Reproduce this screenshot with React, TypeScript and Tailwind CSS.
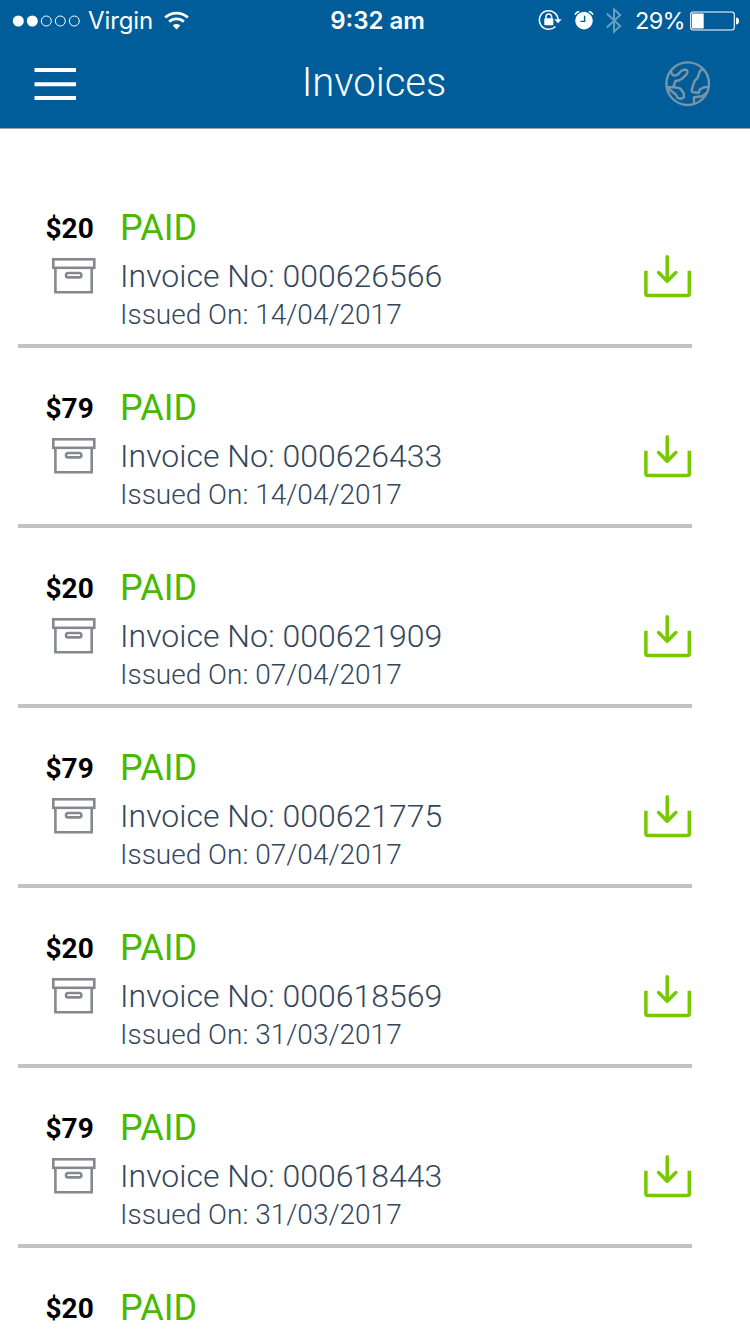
type Invoice = { amount: string; id?: string; issued?: string };

const INVOICES: Invoice[] = [
  { amount: "$20", id: "000626566", issued: "14/04/2017" },
  { amount: "$79", id: "000626433", issued: "14/04/2017" },
  { amount: "$20", id: "000621909", issued: "07/04/2017" },
  { amount: "$79", id: "000621775", issued: "07/04/2017" },
  { amount: "$20", id: "000618569", issued: "31/03/2017" },
  { amount: "$79", id: "000618443", issued: "31/03/2017" },
  { amount: "$20" },
];

export default function App() {
  return (
    <div className="flex h-[1334px] w-[750px] flex-col overflow-hidden bg-white font-['Roboto',sans-serif]">
      <header className="h-[129px] shrink-0 border-b border-[#a0a0a0] bg-[#005d99] text-white">
        <StatusBar />
        <div className="grid h-[88px] grid-cols-[1fr_auto_1fr] items-center pr-[39px] pl-[34px]">
          <MenuIcon />
          <h1 className="-mt-[2px] pl-[3px] text-[40px] leading-[48px] font-light">Invoices</h1>
          <GlobeIcon />
        </div>
      </header>
      <main className="pt-[39px]">
        {INVOICES.map((invoice, i) => (
          <InvoiceRow key={i} invoice={invoice} />
        ))}
      </main>
    </div>
  );
}

function StatusBar() {
  return (
    <div className="grid h-10 grid-cols-[1fr_auto_1fr] items-center pr-[11px] pl-3 font-['Inter',sans-serif] text-[24px] leading-10">
      <div className="flex items-center">
        <SignalDots />
        <span className="mt-px ml-[7px] tracking-[-0.1px]">Virgin</span>
        <WifiIcon />
      </div>
      <span className="mt-px pl-[4px] font-semibold">9:32 am</span>
      <div className="flex items-center justify-end">
        <RotationLockIcon />
        <AlarmIcon />
        <BluetoothIcon />
        <span className="mt-px mr-[5px] ml-[13px] text-[23.5px] tracking-[-0.7px]">29%</span>
        <BatteryIcon />
      </div>
    </div>
  );
}

function InvoiceRow({ invoice }: { invoice: Invoice }) {
  return (
    <article className="mr-[58px] ml-[18px] flex h-[180px] border-b-4 border-[#c1c4c4] pt-9">
      <div className="w-[102px] shrink-0 pl-7">
        <p className="-ml-[0.5px] pt-px text-[28px] leading-[48px] font-bold text-black">{invoice.amount}</p>
        <ArchiveIcon />
      </div>
      <div className="flex-1 font-light whitespace-nowrap text-[#34465b]">
        <p className="text-[36px] leading-[48px] font-normal text-[#48b800]">PAID</p>
        {invoice.id && <p className="text-[32px] leading-[48px]">Invoice No: {invoice.id}</p>}
        {invoice.issued && <p className="pt-px text-[28px] leading-7">Issued On: {invoice.issued}</p>}
      </div>
      <DownloadIcon />
    </article>
  );
}

function SignalDots() {
  return (
    <svg width="69" height="12" viewBox="0 0 69 12" fill="none" stroke="white">
      <circle cx="6.3" cy="6" r="5.5" fill="white" stroke="none" />
      <circle cx="20.3" cy="6" r="5.5" fill="white" stroke="none" />
      <circle cx="34.3" cy="6" r="5" />
      <circle cx="48.3" cy="6" r="5" />
      <circle cx="62.3" cy="6" r="5" />
    </svg>
  );
}

function WifiIcon() {
  return (
    <svg className="-mt-px ml-[11px]" width="25" height="19" viewBox="0 0 25 19" fill="none" stroke="white" strokeWidth="2.8">
      <path d="M1.2 6.6C7.5.7 17.5.7 23.8 6.6" />
      <path d="M5.2 10.7C9.3 6.9 15.7 6.9 19.8 10.7" />
      <path d="M12.5 18.4 8.7 14.4C10.8 12.4 14.2 12.4 16.3 14.4Z" fill="white" stroke="none" />
    </svg>
  );
}

function RotationLockIcon() {
  return (
    <svg className="-mt-px" width="24" height="22" viewBox="0 0 24 22" fill="none" stroke="white" strokeWidth="1.5">
      <path d="M17.4 17.5A9.3 9.3 0 1 1 20 11" />
      <path d="M16.3 10.2h7.4L20 14.2Z" fill="white" stroke="none" />
      <rect x="6.3" y="9.2" width="9" height="7" rx="0.8" fill="white" stroke="none" />
      <path d="M8 9.5V7.8a2.8 2.8 0 0 1 5.6 0v1.7" />
    </svg>
  );
}

function AlarmIcon() {
  return (
    <svg className="-mt-[2px] ml-3" width="20" height="20" viewBox="0 0 20 20" fill="none">
      <circle cx="10" cy="10.6" r="8.8" fill="white" />
      <path d="M1 4.8Q2 2 5.2 1.4M19 4.8Q18 2 14.8 1.4" stroke="white" strokeWidth="1.5" />
      <path d="M10.6 5.8v5.6H6.4" stroke="#005d99" strokeWidth="1.4" />
    </svg>
  );
}

function BluetoothIcon() {
  return (
    <svg className="-mt-px ml-3" width="16" height="28" viewBox="0 0 16 28" fill="none" stroke="#639ec3" strokeWidth="2">
      <path d="M.8 7.5 14.2 20 8 25.7V3.3l6.2 5.7L.8 21.5" />
    </svg>
  );
}

function BatteryIcon() {
  return (
    <svg width="49" height="20" viewBox="0 0 49 20" fill="none">
      <rect x="0.7" y="1" width="43.6" height="18" rx="2.5" stroke="white" strokeWidth="1.1" />
      <rect x="2" y="2.4" width="11.7" height="15.2" rx="0.8" fill="white" />
      <path d="M46 6.5q3 0 3 3.5t-3 3.5Z" fill="white" />
    </svg>
  );
}

function MenuIcon() {
  return (
    <svg width="42" height="32" viewBox="0 0 42 32" fill="white">
      <path d="M.5 0H42v4H.5ZM.5 14.3H42v4H.5ZM.5 28H42v4H.5Z" />
    </svg>
  );
}

function GlobeIcon() {
  return (
    <svg
      className="-mt-px justify-self-end"
      width="46"
      height="46"
      viewBox="0 0 46 46"
      fill="none"
      stroke="#7896a8"
      strokeWidth="2.4"
      strokeLinejoin="round"
    >
      <circle cx="22.7" cy="22.7" r="21.3" />
      <path d="M5.7 9.7q.8 3 2 4.3 2.5 1.5 6-1.3l2.6-3q2-1 4.4-1 2.5.8 1.5 3.3-.3 1.5-5.9 6.3l-2 1-4 .7q-.2 2-1 3.3l-1.3 2.7" />
      <path d="M2.3 26.3h6q6 .5 7.4 1.7l3 4.3.3 4-2.7 1.4-3.6-.7-1.7-3.3-3.3-2.7Q5 30 3 26.3" />
      <path d="M37.7 8l-2.7 2-2.7 7.5q-2.5 1-3.6 4.8l-2 6.5q0 2.3 1.6 2.5l5.4.4 1.3-3.4 4-2 4-.3" />
      <path d="M29 43v-6.7l8-1 4-3" />
    </svg>
  );
}

function ArchiveIcon() {
  return (
    <svg className="mt-[5px] ml-[6px]" width="44" height="36" viewBox="0 0 44 36" fill="none" stroke="#85898e" strokeWidth="2.6">
      <rect x="1.3" y="1.3" width="41" height="8.5" />
      <path d="M3.4 10v24.3h36.3V10" />
      <rect x="14" y="15" width="15.4" height="4.4" rx="2.2" />
    </svg>
  );
}

function DownloadIcon() {
  return (
    <svg
      className="mt-[50px] shrink-0"
      width="49"
      height="45"
      viewBox="0 0 49 45"
      fill="none"
      stroke="#76c800"
      strokeWidth="3.5"
      strokeLinecap="round"
      strokeLinejoin="round"
    >
      <path d="M24.2 2.7v24.5M15.6 18.5l8.6 8.7 8.6-8.7" />
      <path d="M2.9 16.8v22.9q0 1.7 1.7 1.7h40q1.7 0 1.7-1.7V16.8" strokeLinecap="butt" />
    </svg>
  );
}
